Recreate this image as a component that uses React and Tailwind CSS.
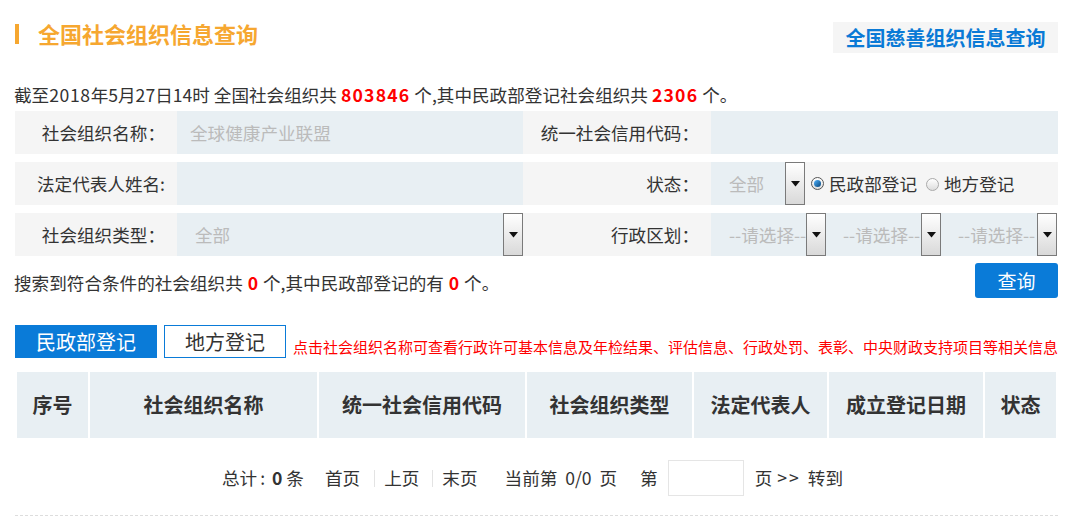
import React from 'react';

const FONT = { fontFamily: '"Microsoft YaHei", "Noto Sans CJK SC", "Liberation Sans", sans-serif' };

const Arrow = () => (
  <div className="w-[20px] h-full shrink-0 border border-[#7a7a7a] bg-gradient-to-b from-white to-[#d9d9d9] flex items-center justify-center">
    <svg width="9" height="6" viewBox="0 0 9 6"><path d="M0 0h9L4.5 5.5z" fill="#111" /></svg>
  </div>
);

const Select = ({ text, className = '', textClass = 'pl-[18px]' }) => (
  <div className={`flex h-full bg-[#e8eff3] ${className}`}>
    <div className={`flex-1 flex items-center overflow-hidden whitespace-nowrap text-[#bbbbbb] ${textClass}`}>{text}</div>
    <Arrow />
  </div>
);

const Radio = ({ checked }) => (
  <span className={`inline-flex items-center justify-center w-[13px] h-[13px] rounded-full border ${checked ? 'border-[#555]' : 'border-[#aaa]'} bg-gradient-to-b from-white to-[#ddd]`}>
    {checked && <span className="w-[7px] h-[7px] rounded-full bg-gradient-to-br from-[#4fb3ff] to-[#05457a]"></span>}
  </span>
);

const Label = ({ children, w, pr = 'pr-[12px]' }) => (
  <div className={`${w} h-full shrink-0 bg-[#f5f5f5] flex items-center justify-end ${pr} text-[#333]`}>{children}</div>
);

const cols = [
  ['序号', 'w-[71px]'],
  ['社会组织名称', 'w-[227px]'],
  ['统一社会信用代码', 'w-[206px]'],
  ['社会组织类型', 'w-[165px]'],
  ['法定代表人', 'w-[133px]'],
  ['成立登记日期', 'w-[154px]'],
  ['状态', 'w-[71px]'],
];

export default function App() {
  return (
    <div className="bg-white w-[1072px] h-[517px] overflow-hidden" style={FONT}>
      <div className="ml-[15px] w-[1043px]">
        {/* header */}
        <div className="flex justify-between items-start pt-[22px]">
          <div className="flex items-center h-[23px]">
            <div className="w-[4px] h-[20px] bg-[#f6a730]"></div>
            <h1 className="ml-[19px] text-[22px] font-bold text-[#f6a730] leading-[23px]">全国社会组织信息查询</h1>
          </div>
          <div className="w-[225px] h-[31px] bg-[#f5f5f5] flex items-center justify-center text-[20px] font-bold text-[#0a7ad6] leading-none">
            全国慈善组织信息查询
          </div>
        </div>

        <p className="mt-[31px] text-[17.6px] leading-[22px] text-[#333] -ml-[1px]">
          截至<span className="tracking-[0.6px]">2018</span>年5月27日14时 全国社会组织共 <b className="text-[#f00] tracking-[1.2px]">803846</b> 个,其中民政部登记社会组织共 <b className="text-[#f00] tracking-[1.2px]">2306</b> 个。
        </p>

        {/* form */}
        <div className="mt-[5px] flex flex-col gap-[8px] text-[17.6px] leading-none">
          <div className="flex h-[43px]">
            <Label w="w-[162px]">社会组织名称：</Label>
            <div className="w-[346px] bg-[#e8eff3] flex items-center pl-[13px] text-[#bbbbbb]">全球健康产业联盟</div>
            <Label w="w-[188px]">统一社会信用代码：</Label>
            <div className="flex-1 bg-[#e8eff3]"></div>
          </div>
          <div className="flex h-[43px]">
            <Label w="w-[162px]">法定代表人姓名:</Label>
            <div className="w-[346px] bg-[#e8eff3]"></div>
            <Label w="w-[188px]">状态：</Label>
            <Select text="全部" className="w-[94px]" />
            <div className="flex-1 bg-[#f5f5f5] flex items-center pl-[6px] text-[#333]">
              <Radio checked />
              <span className="ml-[5px]">民政部登记</span>
              <span className="ml-[9px]"><Radio /></span>
              <span className="ml-[5px]">地方登记</span>
            </div>
          </div>
          <div className="flex h-[43px]">
            <Label w="w-[162px]">社会组织类型：</Label>
            <Select text="全部" className="w-[346px]" />
            <Label w="w-[188px]">行政区划：</Label>
            <div className="flex-1 flex">
              <Select text="--请选择--" className="w-[115px]" />
              <Select text="--请选择--" className="w-[115px]" textClass="pl-[17px]" />
              <Select text="--请选择--" className="w-[116px]" textClass="pl-[17px]" />
              <div className="flex-1"></div>
            </div>
          </div>
        </div>

        {/* result line */}
        <div className="mt-[7px] flex items-center justify-between h-[35px]">
          <p className="text-[17.6px] leading-[22px] text-[#333] pt-[5px] -ml-[1px]">
            搜索到符合条件的社会组织共 <b className="text-[#f00] px-[1px]">0</b> 个,其中民政部登记的有 <b className="text-[#f00] px-[1px]">0</b> 个。
          </p>
          <button className="w-[83px] h-[35px] rounded-[3px] bg-[#0a7bd8] text-white text-[19px] leading-none">查询</button>
        </div>

        {/* tabs */}
        <div className="mt-[27px] flex items-end h-[33px]">
          <div className="w-[142px] h-full bg-[#0a7bd8] text-white text-[20px] flex items-center justify-center">民政部登记</div>
          <div className="ml-[7px] w-[122px] h-full border border-[#0a7bd8] text-[#333] text-[20px] flex items-center justify-center">地方登记</div>
          <p className="ml-[7px] text-[15px] leading-[18px] text-[#f00] whitespace-nowrap pb-[2px]">
            点击社会组织名称可查看行政许可基本信息及年检结果、评估信息、行政处罚、表彰、中央财政支持项目等相关信息
          </p>
        </div>

        {/* table header */}
        <div className="mt-[14px] flex gap-[2px] px-[2px] h-[66px]">
          {cols.map(([t, w]) => (
            <div key={t} className={`${w} bg-[#e8eff3] flex items-center justify-center text-[20px] font-bold text-[#333]`}>{t}</div>
          ))}
        </div>

        {/* pagination */}
        <div className="mt-[22px] flex items-center justify-center text-[17.6px] text-[#333] leading-none h-[36px] pr-[8px]">
          <span>总计<span className="mx-[3px]">:</span> <b>0</b> 条</span>
          <span className="ml-[21px]">首页</span>
          <span className="ml-[14px] mr-[9px] w-px h-[17px] bg-[#e3e3e3]"></span>
          <span>上页</span>
          <span className="ml-[13px] mr-[9px] w-px h-[17px] bg-[#e3e3e3]"></span>
          <span>末页</span>
          <span className="ml-[27px]">当前第&nbsp;&nbsp;0/0&nbsp;&nbsp;页</span>
          <span className="ml-[23px]">第</span>
          <div className="ml-[10px] w-[76px] h-[36px] border border-[#e5e5e5]"></div>
          <span className="ml-[11px]">页</span>
          <span className="ml-[5px] tracking-[2px]">&gt;&gt;</span>
          <span className="ml-[7px]">转到</span>
        </div>

        <div className="mt-[19px] border-t border-dashed border-[#dddddd]"></div>
      </div>
    </div>
  );
}
